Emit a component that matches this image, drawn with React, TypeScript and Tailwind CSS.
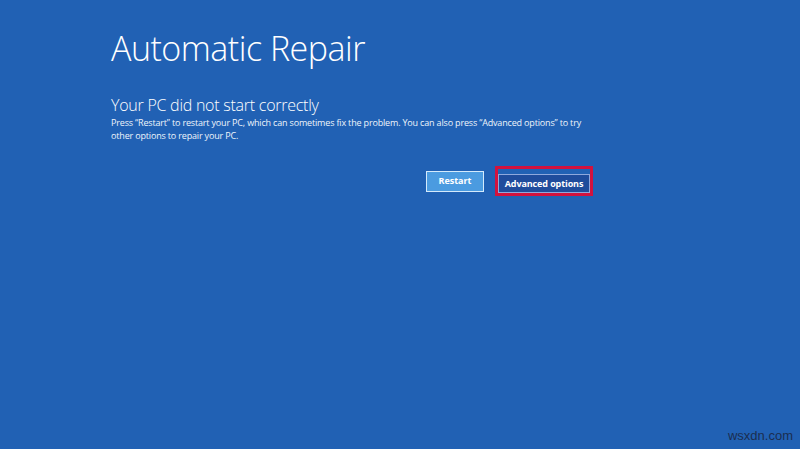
import React from 'react';

// Windows recovery screen: "Automatic Repair"
export default function App() {
  return (
    <div
      className="relative w-[800px] h-[449px] overflow-hidden bg-[#2161b4] text-white"
      style={{ fontFamily: '"Open Sans", "Noto Sans", sans-serif' }}
    >
      <div className="w-[482px] pl-[111px] pt-[28px] box-content">
        <h1 className="text-[34px] font-light leading-[40px] tracking-[-0.5px]">Automatic Repair</h1>

        <h2 className="mt-[27px] text-[16px] font-light leading-[20px] tracking-[-0.25px]">
          Your PC did not start correctly
        </h2>
        <p className="mt-[1px] text-[9px] leading-[13px] tracking-[-0.17px] text-[#eef4fb] whitespace-nowrap">
          Press “Restart” to restart your PC, which can sometimes fix the problem. You can also press “Advanced options” to try
          <br />
          other options to repair your PC.
        </p>

        <div className="mt-[24px] flex items-center justify-end gap-[11px]">
          <button className="w-[58px] h-[21px] border border-[#d4eafc] bg-[#4b9be0] text-[9px] font-bold text-white">
            Restart
          </button>
          <div className="border-[3px] border-[#d2123e]">
            <button className="w-[92px] h-[19px] border border-[#8fa8dc] bg-[#1f4c9c] text-[9px] font-bold text-white tracking-[-0.1px]">
              Advanced options
            </button>
          </div>
        </div>
      </div>

      <div
        className="absolute right-[7px] bottom-[4px] text-[13px] text-[#1b2e50]"
        style={{ fontFamily: '"Liberation Sans", sans-serif' }}
      >
        wsxdn.com
      </div>
    </div>
  );
}
